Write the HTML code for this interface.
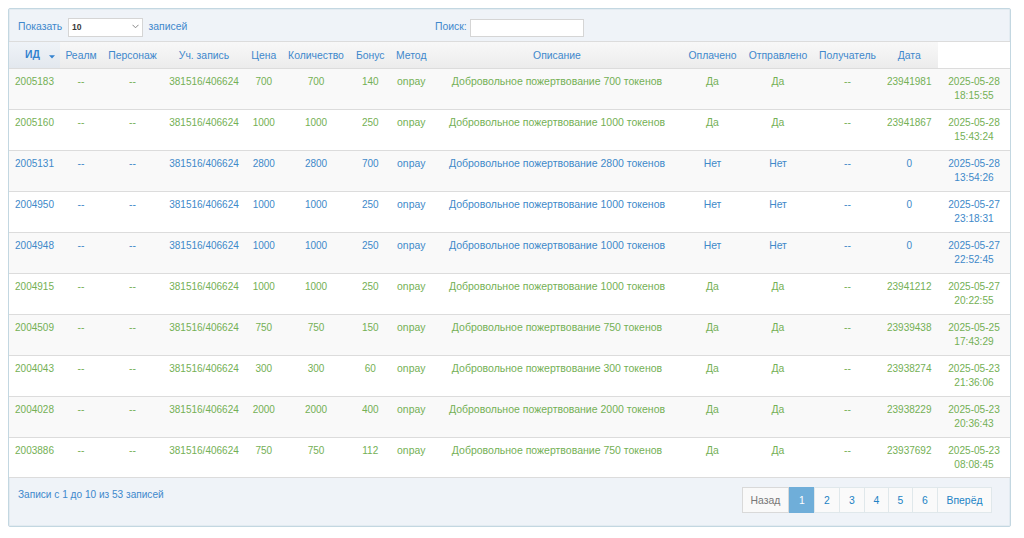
<!DOCTYPE html><html><head><meta charset="utf-8"><style>
*{margin:0;padding:0;box-sizing:border-box}
html,body{width:1024px;height:538px;background:#fff;overflow:hidden;font-family:"Liberation Sans",sans-serif;font-size:10.4px;line-height:14.3px}
.wrap{position:absolute;left:8px;top:8px;width:1003px;height:519px;border:1px solid #c3d7e1;border-radius:2px;background:#eff3f8;box-shadow:inset 0 0 0 1px rgba(205,222,230,0.35)}
.tb{position:absolute;left:9px;top:9px;width:1001px;height:32px;background:#eff3f8}
.a{position:absolute;white-space:nowrap}
.hb{position:absolute;top:42px;height:26px;background:linear-gradient(#f8f8f8,#ececec)}
.hs{background:linear-gradient(#eff3f8,#e3e8ee)}
.hl{position:absolute;left:9px;height:1px;background:#dcdcdc}
.row{position:absolute;left:9px;width:1001px}
.odd{background:#f9f9f9}
.even{background:#fff}
.c{position:absolute;text-align:center;white-space:nowrap}
.th{color:#4088cc;top:49px}
.g{color:#74b055}
.b{color:#4089c9}
.sel{position:absolute;left:68px;top:18px;width:75px;height:19px;background:#fff;border:1px solid #d5d5d5}
.inp{position:absolute;left:470px;top:19px;width:114px;height:18px;background:#fff;border:1px solid #d5d5d5}
.pg{position:absolute;top:487px;height:26px;border:1px solid #e0e8eb;background:#fafafa;color:#2283c5;text-align:center;line-height:24px;padding-top:1px}
</style></head><body>
<div class="wrap"></div>
<div class="hl" style="top:41px;width:1001px"></div>
<div class="a" style="left:18px;top:19.5px;color:#4088cc">Показать</div>
<div class="sel"></div><div class="a" style="left:72px;top:19.5px;color:#3a3a3a;font-weight:bold;font-size:8.6px">10</div>
<svg class="a" style="left:132px;top:24px" width="7" height="5" viewBox="0 0 7 5"><path d="M0.5 0.8 L3.5 3.8 L6.5 0.8" fill="none" stroke="#888" stroke-width="1"/></svg>
<div class="a" style="left:148.5px;top:19.5px;color:#4088cc">записей</div>
<div class="a" style="left:435px;top:19.5px;color:#4088cc">Поиск:</div>
<div class="inp"></div>
<div class="hb hs" style="left:9px;width:51px"></div>
<div class="hb" style="left:60px;width:41px"></div>
<div class="hb" style="left:101px;width:63px"></div>
<div class="hb" style="left:164px;width:80px"></div>
<div class="hb" style="left:244px;width:39.5px"></div>
<div class="hb" style="left:283.5px;width:65.0px"></div>
<div class="hb" style="left:348.5px;width:43.5px"></div>
<div class="hb" style="left:392px;width:38.5px"></div>
<div class="hb" style="left:430.5px;width:253.0px"></div>
<div class="hb" style="left:683.5px;width:58.0px"></div>
<div class="hb" style="left:741.5px;width:73.0px"></div>
<div class="hb" style="left:814.5px;width:66.0px"></div>
<div class="hb" style="left:880.5px;width:57.5px"></div>
<div class="a" style="left:938px;top:42px;width:72px;height:26px;background:#fff"></div>
<div class="hl" style="top:68px;width:1001px;background:#dcdcdc"></div>
<div class="a th" style="left:25px;top:48.2px;font-weight:bold;color:#3382cf">ИД</div>
<svg class="a" style="left:49px;top:55px" width="6" height="4" viewBox="0 0 6 4"><path d="M0 0.2 L6 0.2 L3 3.4 Z" fill="#3382cf"/></svg>
<div class="c th" style="left:61px;width:40px">Реалм</div>
<div class="c th" style="left:101px;width:63px">Персонаж</div>
<div class="c th" style="left:164px;width:80px">Уч. запись</div>
<div class="c th" style="left:244px;width:39.5px">Цена</div>
<div class="c th" style="left:283.5px;width:65.0px">Количество</div>
<div class="c th" style="left:348.5px;width:43.5px">Бонус</div>
<div class="c th" style="left:392px;width:38.5px">Метод</div>
<div class="c th" style="left:430.5px;width:253.0px">Описание</div>
<div class="c th" style="left:683.5px;width:58.0px">Оплачено</div>
<div class="c th" style="left:741.5px;width:73.0px">Отправлено</div>
<div class="c th" style="left:814.5px;width:66.0px">Получатель</div>
<div class="c th" style="left:880.5px;width:57.5px">Дата</div>
<div class="row odd" style="top:69px;height:40px"></div>
<div class="hl" style="top:109px;width:1001px"></div>
<div class="c g" style="left:8px;width:53px;top:75.2px;font-size:10px;">2005183</div>
<div class="c g" style="left:61px;width:40px;top:75.2px;">--</div>
<div class="c g" style="left:101px;width:63px;top:75.2px;">--</div>
<div class="c g" style="left:164px;width:80px;top:75.2px;font-size:10px;">381516/406624</div>
<div class="c g" style="left:244px;width:39.5px;top:75.2px;font-size:10px;">700</div>
<div class="c g" style="left:283.5px;width:65.0px;top:75.2px;font-size:10px;">700</div>
<div class="c g" style="left:348.5px;width:43.5px;top:75.2px;font-size:10px;">140</div>
<div class="c g" style="left:392px;width:38.5px;top:75.2px;">onpay</div>
<div class="c g" style="left:430.5px;width:253.0px;top:75.2px;font-size:10.5px;margin-top:-1px;">Добровольное пожертвование 700 токенов</div>
<div class="c g" style="left:683.5px;width:58.0px;top:75.2px;">Да</div>
<div class="c g" style="left:741.5px;width:73.0px;top:75.2px;">Да</div>
<div class="c g" style="left:814.5px;width:66.0px;top:75.2px;">--</div>
<div class="c g" style="left:880.5px;width:57.5px;top:75.2px;font-size:10px;">23941981</div>
<div class="c g" style="left:938px;width:72px;top:75.2px;font-size:10.1px">2025-05-28<br>18:15:55</div>
<div class="row even" style="top:110px;height:40px"></div>
<div class="hl" style="top:150px;width:1001px"></div>
<div class="c g" style="left:8px;width:53px;top:116.2px;font-size:10px;">2005160</div>
<div class="c g" style="left:61px;width:40px;top:116.2px;">--</div>
<div class="c g" style="left:101px;width:63px;top:116.2px;">--</div>
<div class="c g" style="left:164px;width:80px;top:116.2px;font-size:10px;">381516/406624</div>
<div class="c g" style="left:244px;width:39.5px;top:116.2px;font-size:10px;">1000</div>
<div class="c g" style="left:283.5px;width:65.0px;top:116.2px;font-size:10px;">1000</div>
<div class="c g" style="left:348.5px;width:43.5px;top:116.2px;font-size:10px;">250</div>
<div class="c g" style="left:392px;width:38.5px;top:116.2px;">onpay</div>
<div class="c g" style="left:430.5px;width:253.0px;top:116.2px;font-size:10.5px;margin-top:-1px;">Добровольное пожертвование 1000 токенов</div>
<div class="c g" style="left:683.5px;width:58.0px;top:116.2px;">Да</div>
<div class="c g" style="left:741.5px;width:73.0px;top:116.2px;">Да</div>
<div class="c g" style="left:814.5px;width:66.0px;top:116.2px;">--</div>
<div class="c g" style="left:880.5px;width:57.5px;top:116.2px;font-size:10px;">23941867</div>
<div class="c g" style="left:938px;width:72px;top:116.2px;font-size:10.1px">2025-05-28<br>15:43:24</div>
<div class="row odd" style="top:151px;height:40px"></div>
<div class="hl" style="top:191px;width:1001px"></div>
<div class="c b" style="left:8px;width:53px;top:157.2px;font-size:10px;">2005131</div>
<div class="c b" style="left:61px;width:40px;top:157.2px;">--</div>
<div class="c b" style="left:101px;width:63px;top:157.2px;">--</div>
<div class="c b" style="left:164px;width:80px;top:157.2px;font-size:10px;">381516/406624</div>
<div class="c b" style="left:244px;width:39.5px;top:157.2px;font-size:10px;">2800</div>
<div class="c b" style="left:283.5px;width:65.0px;top:157.2px;font-size:10px;">2800</div>
<div class="c b" style="left:348.5px;width:43.5px;top:157.2px;font-size:10px;">700</div>
<div class="c b" style="left:392px;width:38.5px;top:157.2px;">onpay</div>
<div class="c b" style="left:430.5px;width:253.0px;top:157.2px;font-size:10.5px;margin-top:-1px;">Добровольное пожертвование 2800 токенов</div>
<div class="c b" style="left:683.5px;width:58.0px;top:157.2px;">Нет</div>
<div class="c b" style="left:741.5px;width:73.0px;top:157.2px;">Нет</div>
<div class="c b" style="left:814.5px;width:66.0px;top:157.2px;">--</div>
<div class="c b" style="left:880.5px;width:57.5px;top:157.2px;font-size:10px;">0</div>
<div class="c b" style="left:938px;width:72px;top:157.2px;font-size:10.1px">2025-05-28<br>13:54:26</div>
<div class="row even" style="top:192px;height:40px"></div>
<div class="hl" style="top:232px;width:1001px"></div>
<div class="c b" style="left:8px;width:53px;top:198.2px;font-size:10px;">2004950</div>
<div class="c b" style="left:61px;width:40px;top:198.2px;">--</div>
<div class="c b" style="left:101px;width:63px;top:198.2px;">--</div>
<div class="c b" style="left:164px;width:80px;top:198.2px;font-size:10px;">381516/406624</div>
<div class="c b" style="left:244px;width:39.5px;top:198.2px;font-size:10px;">1000</div>
<div class="c b" style="left:283.5px;width:65.0px;top:198.2px;font-size:10px;">1000</div>
<div class="c b" style="left:348.5px;width:43.5px;top:198.2px;font-size:10px;">250</div>
<div class="c b" style="left:392px;width:38.5px;top:198.2px;">onpay</div>
<div class="c b" style="left:430.5px;width:253.0px;top:198.2px;font-size:10.5px;margin-top:-1px;">Добровольное пожертвование 1000 токенов</div>
<div class="c b" style="left:683.5px;width:58.0px;top:198.2px;">Нет</div>
<div class="c b" style="left:741.5px;width:73.0px;top:198.2px;">Нет</div>
<div class="c b" style="left:814.5px;width:66.0px;top:198.2px;">--</div>
<div class="c b" style="left:880.5px;width:57.5px;top:198.2px;font-size:10px;">0</div>
<div class="c b" style="left:938px;width:72px;top:198.2px;font-size:10.1px">2025-05-27<br>23:18:31</div>
<div class="row odd" style="top:233px;height:40px"></div>
<div class="hl" style="top:273px;width:1001px"></div>
<div class="c b" style="left:8px;width:53px;top:239.2px;font-size:10px;">2004948</div>
<div class="c b" style="left:61px;width:40px;top:239.2px;">--</div>
<div class="c b" style="left:101px;width:63px;top:239.2px;">--</div>
<div class="c b" style="left:164px;width:80px;top:239.2px;font-size:10px;">381516/406624</div>
<div class="c b" style="left:244px;width:39.5px;top:239.2px;font-size:10px;">1000</div>
<div class="c b" style="left:283.5px;width:65.0px;top:239.2px;font-size:10px;">1000</div>
<div class="c b" style="left:348.5px;width:43.5px;top:239.2px;font-size:10px;">250</div>
<div class="c b" style="left:392px;width:38.5px;top:239.2px;">onpay</div>
<div class="c b" style="left:430.5px;width:253.0px;top:239.2px;font-size:10.5px;margin-top:-1px;">Добровольное пожертвование 1000 токенов</div>
<div class="c b" style="left:683.5px;width:58.0px;top:239.2px;">Нет</div>
<div class="c b" style="left:741.5px;width:73.0px;top:239.2px;">Нет</div>
<div class="c b" style="left:814.5px;width:66.0px;top:239.2px;">--</div>
<div class="c b" style="left:880.5px;width:57.5px;top:239.2px;font-size:10px;">0</div>
<div class="c b" style="left:938px;width:72px;top:239.2px;font-size:10.1px">2025-05-27<br>22:52:45</div>
<div class="row even" style="top:274px;height:40px"></div>
<div class="hl" style="top:314px;width:1001px"></div>
<div class="c g" style="left:8px;width:53px;top:280.2px;font-size:10px;">2004915</div>
<div class="c g" style="left:61px;width:40px;top:280.2px;">--</div>
<div class="c g" style="left:101px;width:63px;top:280.2px;">--</div>
<div class="c g" style="left:164px;width:80px;top:280.2px;font-size:10px;">381516/406624</div>
<div class="c g" style="left:244px;width:39.5px;top:280.2px;font-size:10px;">1000</div>
<div class="c g" style="left:283.5px;width:65.0px;top:280.2px;font-size:10px;">1000</div>
<div class="c g" style="left:348.5px;width:43.5px;top:280.2px;font-size:10px;">250</div>
<div class="c g" style="left:392px;width:38.5px;top:280.2px;">onpay</div>
<div class="c g" style="left:430.5px;width:253.0px;top:280.2px;font-size:10.5px;margin-top:-1px;">Добровольное пожертвование 1000 токенов</div>
<div class="c g" style="left:683.5px;width:58.0px;top:280.2px;">Да</div>
<div class="c g" style="left:741.5px;width:73.0px;top:280.2px;">Да</div>
<div class="c g" style="left:814.5px;width:66.0px;top:280.2px;">--</div>
<div class="c g" style="left:880.5px;width:57.5px;top:280.2px;font-size:10px;">23941212</div>
<div class="c g" style="left:938px;width:72px;top:280.2px;font-size:10.1px">2025-05-27<br>20:22:55</div>
<div class="row odd" style="top:315px;height:40px"></div>
<div class="hl" style="top:355px;width:1001px"></div>
<div class="c g" style="left:8px;width:53px;top:321.2px;font-size:10px;">2004509</div>
<div class="c g" style="left:61px;width:40px;top:321.2px;">--</div>
<div class="c g" style="left:101px;width:63px;top:321.2px;">--</div>
<div class="c g" style="left:164px;width:80px;top:321.2px;font-size:10px;">381516/406624</div>
<div class="c g" style="left:244px;width:39.5px;top:321.2px;font-size:10px;">750</div>
<div class="c g" style="left:283.5px;width:65.0px;top:321.2px;font-size:10px;">750</div>
<div class="c g" style="left:348.5px;width:43.5px;top:321.2px;font-size:10px;">150</div>
<div class="c g" style="left:392px;width:38.5px;top:321.2px;">onpay</div>
<div class="c g" style="left:430.5px;width:253.0px;top:321.2px;font-size:10.5px;margin-top:-1px;">Добровольное пожертвование 750 токенов</div>
<div class="c g" style="left:683.5px;width:58.0px;top:321.2px;">Да</div>
<div class="c g" style="left:741.5px;width:73.0px;top:321.2px;">Да</div>
<div class="c g" style="left:814.5px;width:66.0px;top:321.2px;">--</div>
<div class="c g" style="left:880.5px;width:57.5px;top:321.2px;font-size:10px;">23939438</div>
<div class="c g" style="left:938px;width:72px;top:321.2px;font-size:10.1px">2025-05-25<br>17:43:29</div>
<div class="row even" style="top:356px;height:40px"></div>
<div class="hl" style="top:396px;width:1001px"></div>
<div class="c g" style="left:8px;width:53px;top:362.2px;font-size:10px;">2004043</div>
<div class="c g" style="left:61px;width:40px;top:362.2px;">--</div>
<div class="c g" style="left:101px;width:63px;top:362.2px;">--</div>
<div class="c g" style="left:164px;width:80px;top:362.2px;font-size:10px;">381516/406624</div>
<div class="c g" style="left:244px;width:39.5px;top:362.2px;font-size:10px;">300</div>
<div class="c g" style="left:283.5px;width:65.0px;top:362.2px;font-size:10px;">300</div>
<div class="c g" style="left:348.5px;width:43.5px;top:362.2px;font-size:10px;">60</div>
<div class="c g" style="left:392px;width:38.5px;top:362.2px;">onpay</div>
<div class="c g" style="left:430.5px;width:253.0px;top:362.2px;font-size:10.5px;margin-top:-1px;">Добровольное пожертвование 300 токенов</div>
<div class="c g" style="left:683.5px;width:58.0px;top:362.2px;">Да</div>
<div class="c g" style="left:741.5px;width:73.0px;top:362.2px;">Да</div>
<div class="c g" style="left:814.5px;width:66.0px;top:362.2px;">--</div>
<div class="c g" style="left:880.5px;width:57.5px;top:362.2px;font-size:10px;">23938274</div>
<div class="c g" style="left:938px;width:72px;top:362.2px;font-size:10.1px">2025-05-23<br>21:36:06</div>
<div class="row odd" style="top:397px;height:40px"></div>
<div class="hl" style="top:437px;width:1001px"></div>
<div class="c g" style="left:8px;width:53px;top:403.2px;font-size:10px;">2004028</div>
<div class="c g" style="left:61px;width:40px;top:403.2px;">--</div>
<div class="c g" style="left:101px;width:63px;top:403.2px;">--</div>
<div class="c g" style="left:164px;width:80px;top:403.2px;font-size:10px;">381516/406624</div>
<div class="c g" style="left:244px;width:39.5px;top:403.2px;font-size:10px;">2000</div>
<div class="c g" style="left:283.5px;width:65.0px;top:403.2px;font-size:10px;">2000</div>
<div class="c g" style="left:348.5px;width:43.5px;top:403.2px;font-size:10px;">400</div>
<div class="c g" style="left:392px;width:38.5px;top:403.2px;">onpay</div>
<div class="c g" style="left:430.5px;width:253.0px;top:403.2px;font-size:10.5px;margin-top:-1px;">Добровольное пожертвование 2000 токенов</div>
<div class="c g" style="left:683.5px;width:58.0px;top:403.2px;">Да</div>
<div class="c g" style="left:741.5px;width:73.0px;top:403.2px;">Да</div>
<div class="c g" style="left:814.5px;width:66.0px;top:403.2px;">--</div>
<div class="c g" style="left:880.5px;width:57.5px;top:403.2px;font-size:10px;">23938229</div>
<div class="c g" style="left:938px;width:72px;top:403.2px;font-size:10.1px">2025-05-23<br>20:36:43</div>
<div class="row even" style="top:438px;height:39px"></div>
<div class="hl" style="top:477px;width:1001px"></div>
<div class="c g" style="left:8px;width:53px;top:444.2px;font-size:10px;">2003886</div>
<div class="c g" style="left:61px;width:40px;top:444.2px;">--</div>
<div class="c g" style="left:101px;width:63px;top:444.2px;">--</div>
<div class="c g" style="left:164px;width:80px;top:444.2px;font-size:10px;">381516/406624</div>
<div class="c g" style="left:244px;width:39.5px;top:444.2px;font-size:10px;">750</div>
<div class="c g" style="left:283.5px;width:65.0px;top:444.2px;font-size:10px;">750</div>
<div class="c g" style="left:348.5px;width:43.5px;top:444.2px;font-size:10px;">112</div>
<div class="c g" style="left:392px;width:38.5px;top:444.2px;">onpay</div>
<div class="c g" style="left:430.5px;width:253.0px;top:444.2px;font-size:10.5px;margin-top:-1px;">Добровольное пожертвование 750 токенов</div>
<div class="c g" style="left:683.5px;width:58.0px;top:444.2px;">Да</div>
<div class="c g" style="left:741.5px;width:73.0px;top:444.2px;">Да</div>
<div class="c g" style="left:814.5px;width:66.0px;top:444.2px;">--</div>
<div class="c g" style="left:880.5px;width:57.5px;top:444.2px;font-size:10px;">23937692</div>
<div class="c g" style="left:938px;width:72px;top:444.2px;font-size:10.1px">2025-05-23<br>08:08:45</div>
<div class="a" style="left:18px;top:487.5px;color:#4088cc;font-size:10.1px">Записи с 1 до 10 из 53 записей</div>
<div class="pg" style="left:742px;width:47px;color:#777;background:#f9f9f9;border-color:#d9d9d9;">Назад</div>
<div class="pg" style="left:789px;width:26px;color:#fff;background:#6faed9;border-color:#6faed9;">1</div>
<div class="pg" style="left:814px;width:26px;">2</div>
<div class="pg" style="left:839px;width:26px;">3</div>
<div class="pg" style="left:864px;width:25px;">4</div>
<div class="pg" style="left:888px;width:25px;">5</div>
<div class="pg" style="left:912px;width:26px;">6</div>
<div class="pg" style="left:937px;width:55px;">Вперёд</div>
</body></html>
